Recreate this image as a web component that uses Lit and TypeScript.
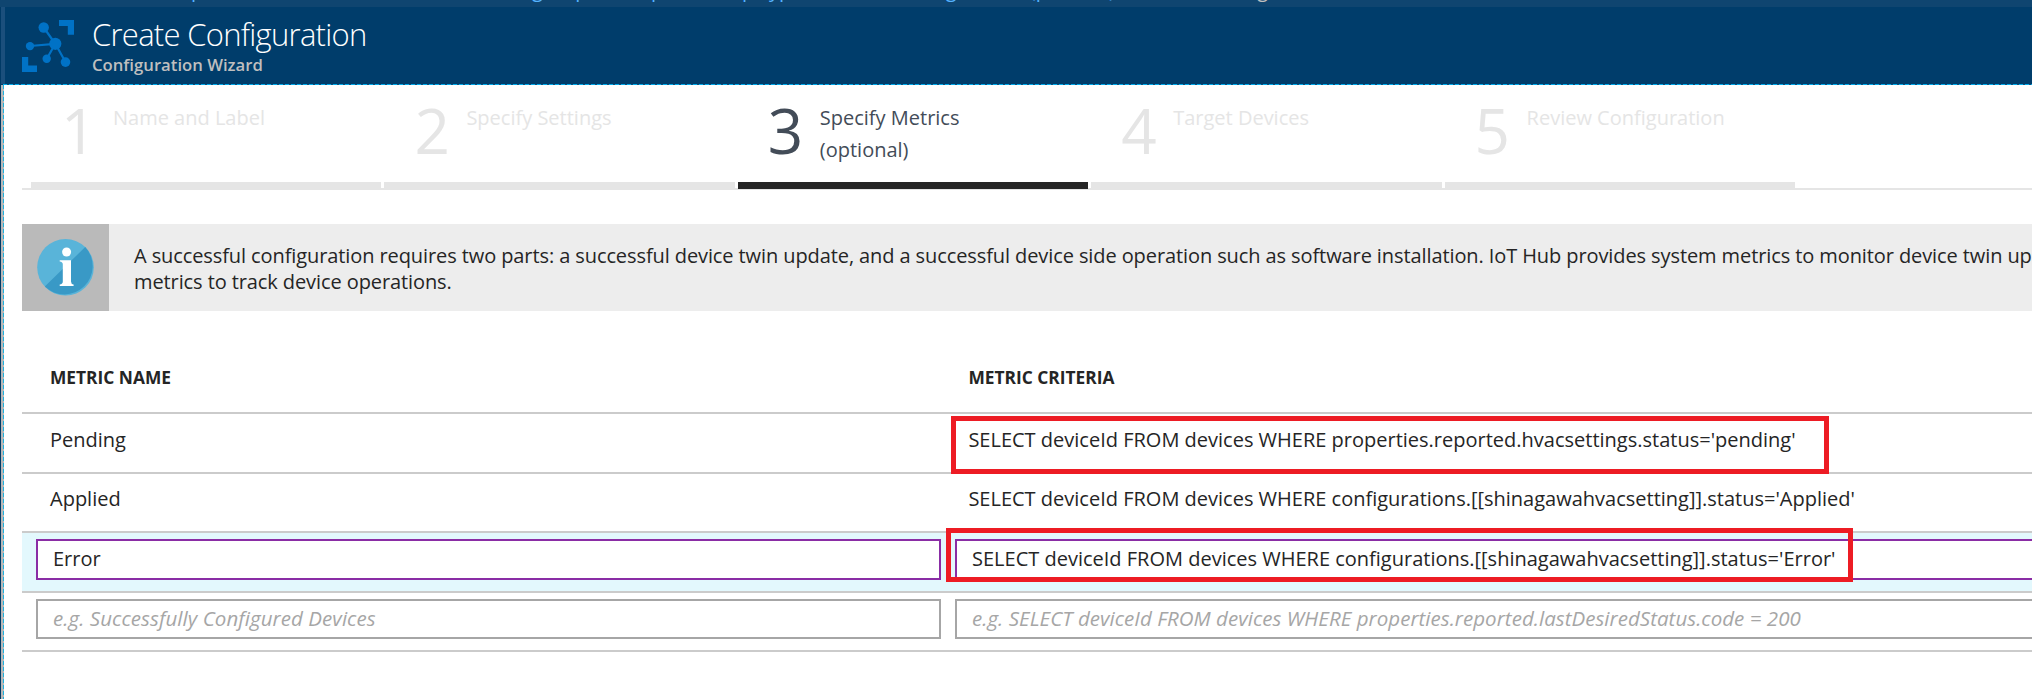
import { LitElement, html, css } from "lit";
import { customElement } from "lit/decorators.js";
import { classMap } from "lit/directives/class-map.js";

interface Step {
  num: number;
  label: string;
  note?: string;
  active?: boolean;
}

interface Metric {
  name: string;
  criteria: string;
  editing?: boolean;
  placeholder?: boolean;
  marked?: "wide" | "tight";
}

const STEPS: Step[] = [
  { num: 1, label: "Name and Label" },
  { num: 2, label: "Specify Settings" },
  { num: 3, label: "Specify Metrics", note: "(optional)", active: true },
  { num: 4, label: "Target Devices" },
  { num: 5, label: "Review Configuration" },
];

const METRICS: Metric[] = [
  {
    name: "Pending",
    criteria: "SELECT deviceId FROM devices WHERE properties.reported.hvacsettings.status='pending'",
    marked: "wide",
  },
  {
    name: "Applied",
    criteria: "SELECT deviceId FROM devices WHERE configurations.[[shinagawahvacsetting]].status='Applied'",
  },
  {
    name: "Error",
    criteria: "SELECT deviceId FROM devices WHERE configurations.[[shinagawahvacsetting]].status='Error'",
    editing: true,
    marked: "tight",
  },
  {
    name: "e.g. Successfully Configured Devices",
    criteria: "e.g. SELECT deviceId FROM devices WHERE properties.reported.lastDesiredStatus.code = 200",
    placeholder: true,
  },
];

/* Breadcrumb fragments, each with the width it takes up in the clipped bar. */
const CRUMBS: { text: string; width: number; current?: boolean }[] = [
  { text: "p", width: 341 },
  { text: "group", width: 119 },
  { text: "p", width: 91 },
  { text: "p", width: 27 },
  { text: "yp", width: 131 },
  { text: "configuration (preview)", width: 242 },
  { text: "Create Configuration", width: 300, current: true },
];

@customElement("crumb-bar")
export class CrumbBar extends LitElement {
  static styles = css`
    :host { display: block; height: 7px; overflow: hidden; background: #0f4570; }
    .crumbs { display: flex; margin-top: -20px; padding-left: 191px; font-size: 20px; line-height: 20px; color: #55b3ff; white-space: nowrap; }
    .crumb { flex: none; }
    .current { color: #bfbfbf; }
  `;
  render() {
    return html`<div class="crumbs">
      ${CRUMBS.map(
        (c) => html`<span class=${classMap({ crumb: true, current: !!c.current })} style="width:${c.width}px">${c.text}</span>`
      )}
    </div>`;
  }
}

@customElement("blade-header")
export class BladeHeader extends LitElement {
  static styles = css`
    :host { display: flex; box-sizing: border-box; height: 77px; padding: 13px 0 0 17px; background: #003d6b; border-left: 4px solid #1b4f7c; margin-left: 1px; }
    .logo { display: block; width: 52px; height: 52px; }
    .titles { margin-left: 18px; margin-top: -6px; white-space: nowrap; }
    .title { font-size: 31px; line-height: 40px; font-weight: 300; letter-spacing: -0.72px; color: #fff; }
    .sub { font-size: 16.7px; line-height: 20px; font-weight: 600; color: #bfbfbf; margin-top: 1px; }
  `;
  render() {
    return html`
      <svg class="logo" viewBox="22 20 52 52" fill="#0072c6">
        <path d="M59 20H74V34.7H67.8V26H59ZM22 57H28.2V65.5H37V72H22Z" />
        <g stroke="#0072c6" stroke-width="2.2">
          <path d="M43.7 27.5L55.3 43.8L30 46M46.8 58.8L55.3 43.8L65.5 62" fill="none" />
        </g>
        <circle cx="43.7" cy="27.5" r="5.2" />
        <circle cx="55.3" cy="43.8" r="6.1" />
        <circle cx="30" cy="46.1" r="4.2" />
        <circle cx="46.7" cy="58.8" r="4.2" />
        <circle cx="65.5" cy="62.1" r="4.8" />
      </svg>
      <div class="titles">
        <div class="title">Create Configuration</div>
        <div class="sub">Configuration Wizard</div>
      </div>
    `;
  }
}

@customElement("wizard-steps")
export class WizardSteps extends LitElement {
  static styles = css`
    :host { display: flex; box-sizing: border-box; gap: 3px; height: 105px; padding-left: 9px; border-bottom: 2px solid #e5e5e5; }
    .step { display: flex; flex: none; box-sizing: border-box; width: 350.4px; height: 105px; padding: 14px 0 0 30px; border-bottom: 8px solid #e5e5e5; color: #e5e5e5; white-space: nowrap; }
    .num { width: 52px; flex: none; font-size: 62px; line-height: 62px; }
    .label { padding-top: 3px; line-height: 32px; }
    .active { color: #434c58; height: 104px; border-bottom: 7px solid #252525; }
  `;
  render() {
    return STEPS.map(
      (s) => html`<div class=${classMap({ step: true, active: !!s.active })}>
        <div class="num">${s.num}</div>
        <div class="label">${s.label}${s.note ? html`<br />${s.note}` : ""}</div>
      </div>`
    );
  }
}

@customElement("info-banner")
export class InfoBanner extends LitElement {
  static styles = css`
    :host { display: flex; height: 87px; margin-top: 34px; background: #ededed; overflow: hidden; }
    .badge { flex: none; width: 87px; height: 87px; background: #bababa; }
    .badge svg { display: block; }
    .text { padding: 19px 0 0 25px; line-height: 26px; letter-spacing: -0.095px; white-space: nowrap; }
  `;
  render() {
    return html`
      <div class="badge">
        <svg width="87" height="87" viewBox="0 0 87 87">
          <circle cx="43.5" cy="43.3" r="28.3" fill="#59b4d9" />
          <path d="M22.8 62.6L63.2 23A28.3 28.3 0 0 1 22.8 62.6Z" fill="#3999c6" />
          <circle cx="44.6" cy="28" r="4.5" fill="#fff" />
          <path d="M37.7 36.2H49V57.5Q49 60 51.6 60.6V62H37.7V60.6Q40.8 60 40.8 57.5V40.2Q40.8 37.8 37.7 37.4Z" fill="#fff" />
        </svg>
      </div>
      <div class="text">
        A successful configuration requires two parts: a successful device twin update, and a successful device side operation such as software installation. IoT Hub provides system metrics to monitor device twin updates. Use custom<br />metrics to track device operations.
      </div>
    `;
  }
}

@customElement("metrics-table")
export class MetricsTable extends LitElement {
  static styles = css`
    :host { display: block; margin-top: 50px; white-space: nowrap; }
    .row { display: grid; grid-template-columns: 905px 14px 1fr; box-sizing: border-box; height: 59.5px; padding-left: 14px; border-bottom: 2px solid #cbcbcb; }
    .head { height: 53px; font-size: 17.35px; font-weight: 700; padding-top: 4px; color: #252525; }
    .cell { position: relative; padding-left: 14px; line-height: 26px; padding-top: 12.6px; }
    .head .cell { padding-top: 0; line-height: 24px; }
    .editing { background: #e3f8fd; }
    .field { position: relative; box-sizing: border-box; height: 40.5px; margin-top: 6px; padding: 5px 0 0 15px; border: 2px solid #8a2da5; background: #fff; line-height: 26px; }
    .last { border-right: 0; }
    .cell.last { padding-left: 13.4px; }
    .placeholder .field { padding-top: 4px; border-color: #a6a6a6; color: #a6a6a6; font-style: italic; font-size: 20.5px; letter-spacing: 0.07px; }
    .placeholder .last { letter-spacing: 0.04px; }
    .mark { position: absolute; box-sizing: border-box; border: 5px solid #ed1c24; }
    .wide { left: -4px; top: 2px; width: 878px; height: 58px; }
    .tight { left: -11px; top: -13px; width: 907px; height: 54px; }
  `;
  render() {
    return html`
      <div class="row head">
        <div class="cell">METRIC NAME</div>
        <span></span>
        <div class="cell last">METRIC CRITERIA</div>
      </div>
      ${METRICS.map((m) => {
        const input = !!(m.editing || m.placeholder);
        const box = { cell: !input, field: input };
        return html`<div class=${classMap({ row: true, editing: !!m.editing, placeholder: !!m.placeholder })}>
          <div class=${classMap(box)}>${m.name}</div>
          <span></span>
          <div class=${classMap({ ...box, last: true })}>${m.criteria}${m.marked ? html`<span class="mark ${m.marked}"></span>` : ""}</div>
        </div>`;
      })}
    `;
  }
}

@customElement("app-root")
export class AppRoot extends LitElement {
  static styles = css`
    :host { display: block; width: 100%; height: 699px; overflow: hidden; background: #003a66; font-family: "Open Sans", "Noto Sans", sans-serif; font-size: 20px; color: #252525; }
    .edge { height: 1px; margin-left: 3px; background: repeating-linear-gradient(90deg, #00abec 0 4px, #0b4f7d 4px 6px); }
    .body { display: flex; height: 614px; margin-left: 1px; background: #b8b8b8; }
    .side { flex: none; width: 1px; margin-left: 2px; background: repeating-linear-gradient(180deg, #1fb0dc 0 4px, #b8b8b8 4px 6px); }
    .content { flex: 1; min-width: 0; padding-left: 18px; background: #fff; }
  `;
  render() {
    return html`
      <crumb-bar></crumb-bar>
      <blade-header></blade-header>
      <div class="edge"></div>
      <div class="body">
        <div class="side"></div>
        <div class="content">
          <wizard-steps></wizard-steps>
          <info-banner></info-banner>
          <metrics-table></metrics-table>
        </div>
      </div>
    `;
  }
}
